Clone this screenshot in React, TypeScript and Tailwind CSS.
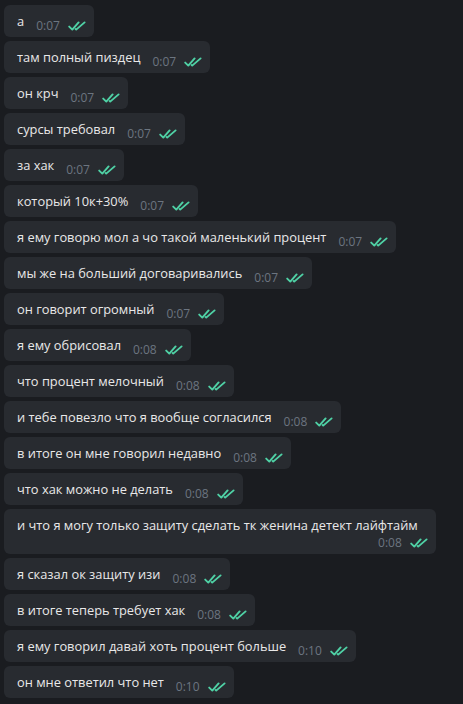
const messages: { text: string; time: string; wrap?: boolean }[] = [
  { text: "а", time: "0:07" },
  { text: "там полный пиздец", time: "0:07" },
  { text: "он крч", time: "0:07" },
  { text: "сурсы требовал", time: "0:07" },
  { text: "за хак", time: "0:07" },
  { text: "который 10к+30%", time: "0:07" },
  { text: "я ему говорю мол а чо такой маленький процент", time: "0:07" },
  { text: "мы же на больший договаривались", time: "0:07" },
  { text: "он говорит огромный", time: "0:07" },
  { text: "я ему обрисовал", time: "0:08" },
  { text: "что процент мелочный", time: "0:08" },
  { text: "и тебе повезло что я вообще согласился", time: "0:08" },
  { text: "в итоге он мне говорил недавно", time: "0:08" },
  { text: "что хак можно не делать", time: "0:08" },
  { text: "и что я могу только защиту сделать тк женина детект лайфтайм", time: "0:08", wrap: true },
  { text: "я сказал ок защиту изи", time: "0:08" },
  { text: "в итоге теперь требует хак", time: "0:08" },
  { text: "я ему говорил давай хоть процент больше", time: "0:10" },
  { text: "он мне ответил что нет", time: "0:10" },
];

function DoubleCheck() {
  return (
    <svg width="18" height="10" viewBox="0 0 18 10" fill="none" className="shrink-0">
      <path d="M1.2 5.6 L4.3 8.6 L10.6 1.4" stroke="#4fd1a5" strokeWidth="1.9" strokeLinecap="round" strokeLinejoin="round" />
      <path d="M7.6 8.1 L8.2 8.6 L16.6 1.4" stroke="#4fd1a5" strokeWidth="1.9" strokeLinecap="round" strokeLinejoin="round" />
    </svg>
  );
}

function Meta({ time }: { time: string }) {
  return (
    <span className="flex items-center gap-[8px] text-[12px] leading-[16px] text-[#6c7580]">
      <span>{time}</span>
      <DoubleCheck />
    </span>
  );
}

export default function App() {
  return (
    <div
      className="w-[463px] h-[704px] overflow-hidden bg-[#1a1c20] pt-[5px] pl-[4px] flex flex-col items-start gap-[4px]"
      style={{ fontFamily: '"Open Sans", "Noto Sans", sans-serif' }}
    >
      {messages.map((m, i) =>
        m.wrap ? (
          <div key={i} className="bg-[#282b30] rounded-[6px] pl-[13px] pr-[8px] pt-[7px] pb-[3px] flex flex-col">
            <span className="text-[12.85px] leading-[18px] text-[#e8e8e8] pr-[10px]">{m.text}</span>
            <span className="self-end mt-[1px]">
              <Meta time={m.time} />
            </span>
          </div>
        ) : (
          <div key={i} className="bg-[#282b30] rounded-[6px] pl-[13px] pr-[8px] h-[32px] flex items-start gap-[12px]">
            <span className="pt-[7px] text-[12.85px] leading-[18px] text-[#e8e8e8] whitespace-nowrap">{m.text}</span>
            <span className="pt-[13px]">
              <Meta time={m.time} />
            </span>
          </div>
        )
      )}
    </div>
  );
}
